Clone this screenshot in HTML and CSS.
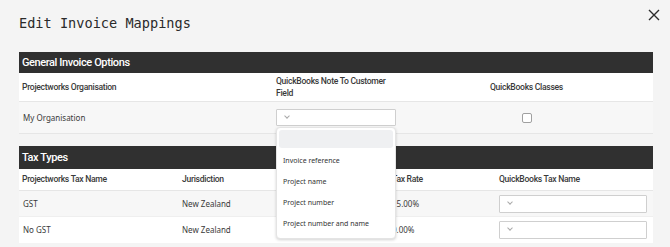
FILE: index.html
```html
<!DOCTYPE html>
<html lang="en">
<head>
    <meta charset="UTF-8">
    <meta name="viewport" content="width=device-width, initial-scale=1.0">
    <title>Edit Invoice Mappings</title>
    <link rel="stylesheet" href="styles.css">
</head>
<body>
    <div class="modal">
        <div class="modal-head">
            <h1 class="modal-title">Edit Invoice Mappings</h1>
            <button class="close-btn" aria-label="Close">
                <svg width="12" height="12" viewBox="0 0 12 12">
                    <path d="M1 1L11 11M11 1L1 11" stroke="#2b2b2b" stroke-width="1.4" fill="none"/>
                </svg>
            </button>
        </div>

        <!-- General options -->
        <section class="group">
            <div class="group-title">General Invoice Options</div>
            <table class="map-table">
                <colgroup>
                    <col style="width: 254px">
                    <col style="width: 127px">
                    <col>
                </colgroup>
                <thead>
                    <tr class="head-row tall">
                        <th>Projectworks Organisation</th>
                        <th>QuickBooks Note To Customer<br>Field</th>
                        <th class="center">QuickBooks Classes</th>
                    </tr>
                </thead>
                <tbody>
                    <tr class="org-row">
                        <td>My Organisation</td>
                        <td>
                            <div class="select-wrap">
                                <div class="select small-select"><span class="chevron"></span></div>
                                <ul class="dropdown">
                                    <li class="active">&nbsp;</li>
                                    <li>Invoice reference</li>
                                    <li>Project name</li>
                                    <li>Project number</li>
                                    <li>Project number and name</li>
                                </ul>
                            </div>
                        </td>
                        <td class="center"><span class="checkbox"></span></td>
                    </tr>
                </tbody>
            </table>
        </section>

        <!-- Tax types -->
        <section class="group">
            <div class="group-title tax-title">Tax Types</div>
            <table class="map-table">
                <colgroup>
                    <col style="width: 160px">
                    <col style="width: 210px">
                    <col style="width: 107px">
                    <col>
                </colgroup>
                <thead>
                    <tr class="head-row">
                        <th>Projectworks Tax Name</th>
                        <th>Jurisdiction</th>
                        <th>Tax Rate</th>
                        <th>QuickBooks Tax Name</th>
                    </tr>
                </thead>
                <tbody>
                    <tr class="tax-row grey">
                        <td>GST</td>
                        <td>New Zealand</td>
                        <td>15.00%</td>
                        <td><div class="select wide-select"><span class="chevron"></span></div></td>
                    </tr>
                    <tr class="tax-row">
                        <td>No GST</td>
                        <td>New Zealand</td>
                        <td>0.00%</td>
                        <td><div class="select wide-select"><span class="chevron"></span></div></td>
                    </tr>
                </tbody>
            </table>
        </section>
    </div>
</body>
</html>
```

FILE: styles.css
```css
:root {
    --bar: #303030;
    --page: #f4f4f4;
    --row-grey: #f7f7f7;
    --line: #e6e6e6;
    --text: #3a3a3a;
}

* {
    margin: 0;
    padding: 0;
    box-sizing: border-box;
}

body {
    background: var(--page);
    font-family: 'Noto Sans', 'Open Sans', sans-serif;
    color: var(--text);
}

/* Modal */
.modal {
    padding: 0 17px 0 19px;
}

.modal-head {
    height: 52px;
    display: flex;
    align-items: flex-start;
    justify-content: space-between;
}

.modal-title {
    margin-top: 15px;
    font-family: 'DejaVu Sans Mono', 'Liberation Mono', monospace;
    font-size: 13.6px;
    font-weight: normal;
    color: #2a2a2a;
}

.close-btn {
    margin-top: 9px;
    margin-right: -7px;
    background: none;
    border: none;
    width: 12px;
    height: 12px;
    cursor: pointer;
}

/* Groups */
.group + .group {
    margin-top: 12px;
}

.group-title {
    background: var(--bar);
    color: #fff;
    height: 21px;
    line-height: 21px;
    padding-left: 3px;
    font-family: 'Roboto', sans-serif;
    font-size: 11px;
    font-weight: 500;
    letter-spacing: -0.4px;
}

.tax-title {
    height: 23px;
    line-height: 24px;
}

/* Tables */
.map-table {
    width: 100%;
    border-collapse: collapse;
    table-layout: fixed;
}

.map-table th {
    background: #fff;
    text-align: left;
    font-family: 'Roboto', sans-serif;
    font-weight: 500;
    font-size: 8.6px;
    letter-spacing: -0.3px;
    color: #3a3a3a;
    line-height: 12px;
    padding: 0 3px;
    vertical-align: middle;
}

.map-table td {
    font-size: 8px;
    padding: 0 3px;
    vertical-align: middle;
}

.map-table .center {
    text-align: center;
}

.head-row {
    height: 22px;
    border-bottom: 1px solid var(--line);
}

.head-row.tall {
    height: 28px;
}

.org-row {
    height: 32px;
    background: var(--row-grey);
    border-bottom: 1px solid var(--line);
}

.tax-row {
    height: 26px;
    background: #fff;
}

.tax-row.grey {
    background: var(--row-grey);
    border-bottom: 1px solid #efefef;
}

.tax-row td:first-child,
.org-row td:first-child {
    padding-left: 4px;
}

/* Selects */
.select-wrap {
    position: relative;
    width: 120px;
}

.select {
    background: #fff;
    border: 1px solid #cfcfcf;
    border-radius: 1px;
    display: flex;
    align-items: center;
    padding-left: 8px;
}

.small-select {
    width: 120px;
    height: 17px;
}

.wide-select {
    width: 148px;
    height: 18px;
}

.chevron {
    width: 4px;
    height: 4px;
    border-right: 1px solid #a8a8a8;
    border-bottom: 1px solid #a8a8a8;
    transform: rotate(45deg);
    margin-top: -3px;
}

.checkbox {
    display: inline-block;
    width: 10px;
    height: 10px;
    border: 1px solid #a0a0a0;
    border-radius: 2px;
    background: #fff;
    vertical-align: middle;
}

/* Dropdown menu */
.dropdown {
    position: absolute;
    top: 18px;
    left: 0;
    width: 120px;
    background: #fff;
    border: 1px solid #e4e4e4;
    border-radius: 4px;
    box-shadow: 0 1px 3px rgba(0, 0, 0, 0.18);
    list-style: none;
    padding: 2px 2px 4px;
    z-index: 5;
}

.dropdown li {
    height: 21px;
    line-height: 21px;
    padding-left: 4px;
    font-size: 7px;
    color: #333;
    white-space: nowrap;
}

.dropdown li.active {
    height: 18px;
    background: #eff0f2;
    border-radius: 3px;
    margin-bottom: 2px;
}
```
